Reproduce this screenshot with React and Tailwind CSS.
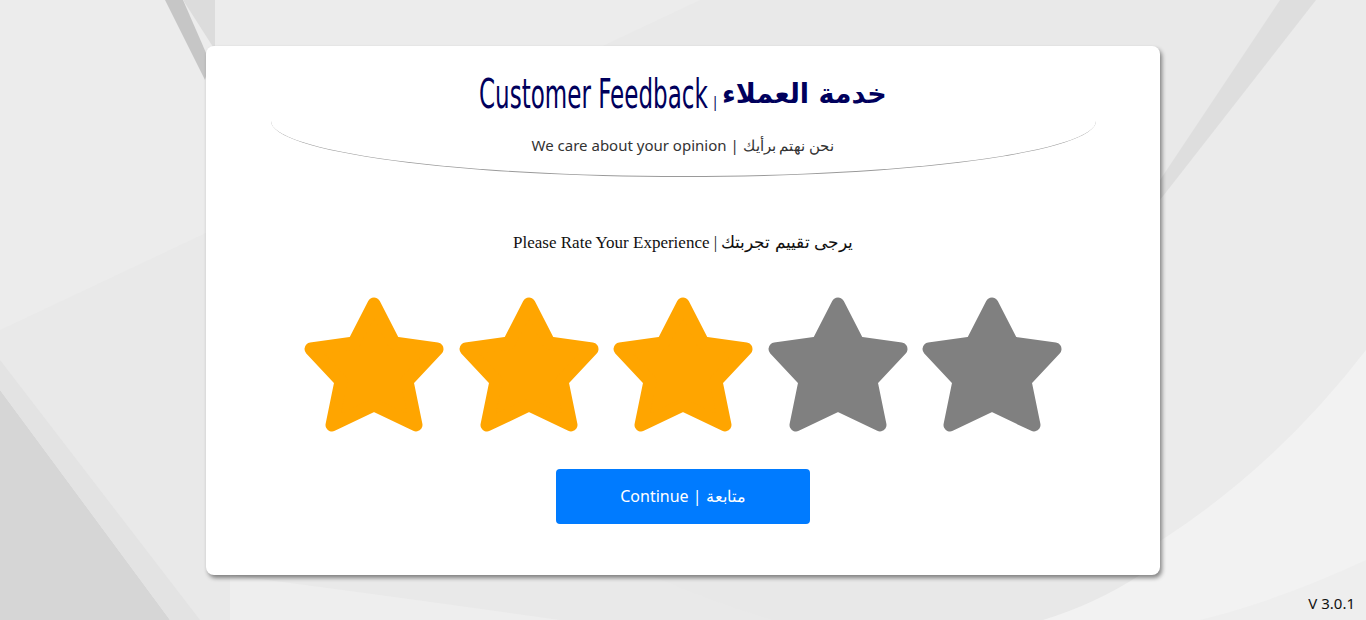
import React from "react";

const STAR_POINTS = "70,7 90,46 133,52 103,84 112,128 70,108 28,128 37,84 7,52 50,46";

function Star({ filled }) {
    const color = filled ? "#ffa500" : "#808080";
    return (
        <svg width="140" height="137" viewBox="0 0 140 137" className="shrink-0">
            <polygon
                points={STAR_POINTS}
                fill={color}
                stroke={color}
                strokeWidth="13"
                strokeLinejoin="round"
            />
        </svg>
    );
}

function Backdrop() {
    return (
        <svg
            className="absolute inset-0 h-full w-full"
            viewBox="0 0 1366 620"
            preserveAspectRatio="none"
        >
            <rect width="1366" height="620" fill="#e9e9e9" />
            <path d="M0 0 H700 L0 330 Z" fill="#ececec" />
            <path d="M0 390 L170 620 H0 Z" fill="#d6d6d6" />
            <path d="M0 360 L200 620 H170 L0 390 Z" fill="#e3e3e3" />
            <path d="M165 0 H183 L210 62 L205 80 Z" fill="#c6c6c6" />
            <path d="M183 0 H215 L215 50 Z" fill="#dcdcdc" />
            <path d="M1280 0 H1366 V350 Q1250 520 1160 560 V185 Z" fill="#ebebeb" />
            <path d="M1280 0 H1316 L1160 200 V180 Z" fill="#dedede" />
            <path d="M1366 350 V620 H1000 Q1220 540 1366 350 Z" fill="#f2f2f2" />
            <path d="M230 575 Q420 600 560 620 H1200 Q1280 600 1366 560 V620 H230 Z" fill="#eeeeee" />
            <path d="M650 575 Q800 640 900 640 Q1040 640 1140 575 Z" fill="#e8e8e8" />
        </svg>
    );
}

export default function App() {
    return (
        <div className="relative h-[620px] w-full overflow-hidden font-['Noto_Sans',sans-serif]">
            <Backdrop />

            <div className="relative flex h-full items-center justify-center">
                <div className="flex h-[529px] w-[954px] flex-col items-center rounded-lg bg-white shadow-[2px_3px_4px_rgba(0,0,0,0.45)]">
                    <div className="w-[825px] rounded-b-[50%_56px] border-b border-[#9a9a9a] pt-[24px] pb-[19px] text-center">
                        <h1 className="flex h-[48px] items-center justify-center text-[#00005c]">
                            <span className="inline-block w-[229px] overflow-visible whitespace-nowrap text-left">
                                <span className="inline-block origin-left scale-x-[0.64] font-['DejaVu_Sans_Condensed',sans-serif] text-[40px] leading-none">
                                    Customer Feedback
                                </span>
                            </span>
                            <span className="mx-[3px] mt-4 text-[14px] leading-none">|</span>
                            <span className="inline-block font-['DejaVu_Sans',sans-serif] text-[27px] font-bold leading-none">
                                خدمة العملاء
                            </span>
                        </h1>
                        <p className="mt-[15px] text-[15px] leading-[24px] text-[#333]">
                            We care about your opinion | نحن نهتم برأيك
                        </p>
                    </div>

                    <p className="mt-[53px] font-['Liberation_Serif','DejaVu_Serif',serif] text-[17px] leading-[26px] text-[#111]">
                        Please Rate Your Experience | يرجى تقييم تجربتك
                    </p>

                    <div className="mt-[41px] flex gap-[14.5px]">
                        <Star filled />
                        <Star filled />
                        <Star filled />
                        <Star />
                        <Star />
                    </div>

                    <button className="mt-[35px] h-[55px] w-[254px] rounded-[4px] bg-[#007bff] text-[16px] text-white">
                        Continue | متابعة
                    </button>
                </div>
            </div>

            <div className="absolute right-[11px] bottom-[6px] text-[15px] text-[#111]">
                V 3.0.1
            </div>
        </div>
    );
}
